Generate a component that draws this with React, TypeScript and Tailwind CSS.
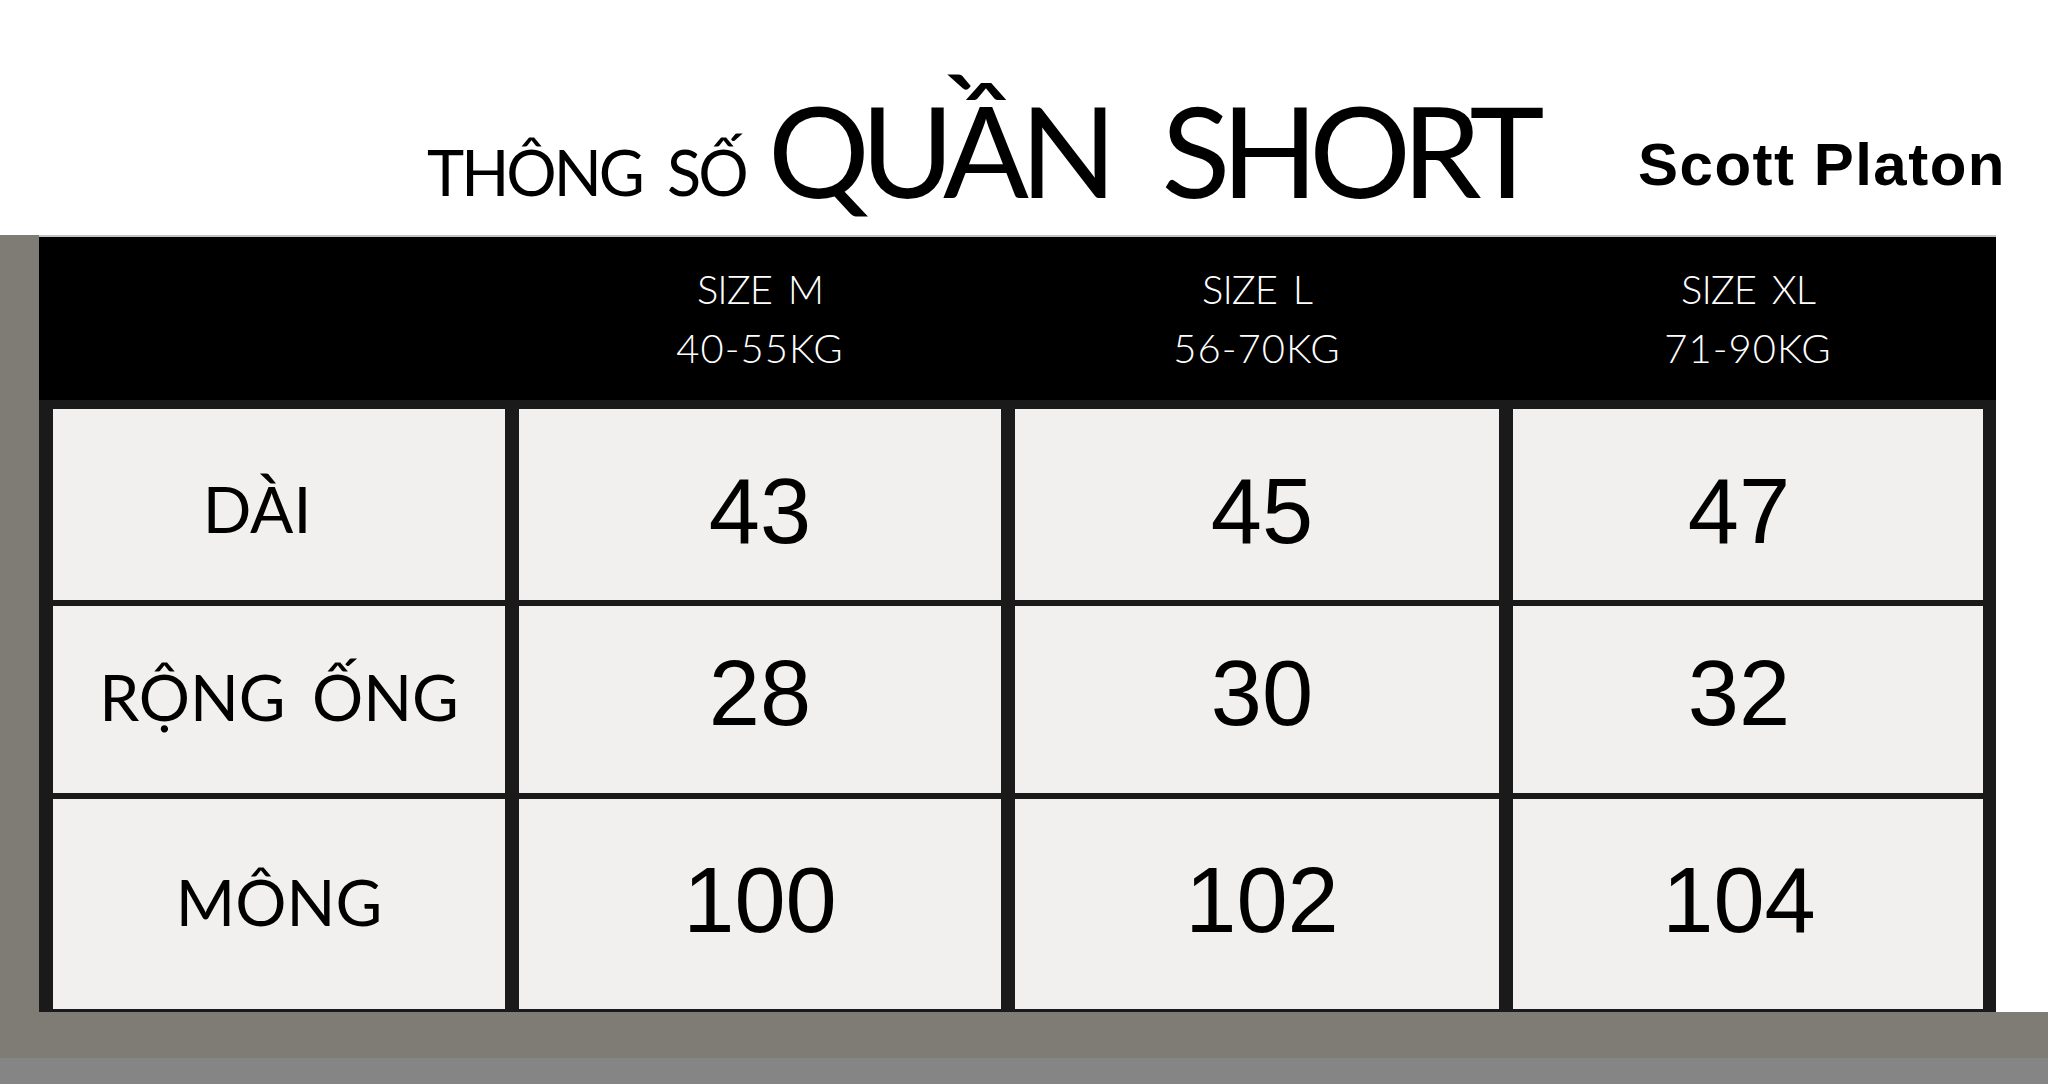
import { Fragment } from 'react';

const sizes = [
  { ten: 'SIZE M', kg: '40-55KG' },
  { ten: 'SIZE L', kg: '56-70KG' },
  { ten: 'SIZE XL', kg: '71-90KG' },
];

// chinh lech nho theo anh goc: hang + cot
const hang = [
  { nhan: 'DÀI', so: ['43', '45', '47'], nhanPad: 'pt-[9px] pr-[44px]', soPad: 'pt-[13px]' },
  { nhan: 'RỘNG ỐNG', so: ['28', '30', '32'], nhanPad: 'pb-[5px]', soPad: 'pb-[13px]' },
  { nhan: 'MÔNG', so: ['100', '102', '104'], nhanPad: 'pb-[5px]', soPad: 'pb-[8px]' },
];
const cotPad = ['', 'pl-[10px]', 'pr-[18px]'];

const cot = 'grid grid-cols-[452px_482px_484px_470px] gap-x-[14px]';

export default function App() {
  return (
    <div className="flex h-[1084px] w-[2048px] flex-col overflow-hidden bg-white">
      {/* tieu de */}
      <header className="flex h-[235px] shrink-0 items-start pl-[427px] text-black">
        <span className="mt-[140px] w-[341px] font-['Lato',sans-serif] text-[63px] leading-none tracking-[-3px] [word-spacing:12px]">
          THÔNG SỐ
        </span>
        <span className="mt-[86px] w-[870px] font-['Lato',sans-serif] text-[127px] leading-none tracking-[-9px] [word-spacing:30px]">
          QUẦN SHORT
        </span>
        <span className="mt-[135px] font-['Liberation_Sans',Arial,sans-serif] text-[60px] font-bold leading-none tracking-[1.5px]">
          Scott Platon
        </span>
      </header>

      <div className="flex h-[777px] shrink-0">
        <div className="w-[39px] bg-[#7f7b75]" />
        <div className="flex w-[1957px] flex-col border-t-2 border-[#c2c2c2] bg-[#1a1a1a]">
          <div className={`${cot} h-[163px] bg-black pl-[14px] font-['Lato',sans-serif] text-[40px] font-light leading-[59px] text-white`}>
            <div />
            {sizes.map((s) => (
              <div key={s.ten} className="flex flex-col items-center justify-center">
                <span className="tracking-[-1px] [word-spacing:6px]">{s.ten}</span>
                <span className="tracking-[1px]">{s.kg}</span>
              </div>
            ))}
          </div>
          <div className={`${cot} mt-[9px] grid-rows-[191px_187px_210px] gap-y-[6px] pl-[14px] pr-[13px]`}>
            {hang.map((h) => (
              <Fragment key={h.nhan}>
                <div
                  className={`flex items-center justify-center bg-[#f1f0ee] font-['Lato',sans-serif] text-[64px] text-black [word-spacing:10px] ${h.nhanPad}`}
                >
                  {h.nhan}
                </div>
                {h.so.map((v, i) => (
                  <div
                    key={v}
                    className={`flex items-center justify-center bg-[#f1f0ee] font-['Liberation_Sans',Arial,sans-serif] text-[92px] text-black ${h.soPad} ${cotPad[i]}`}
                  >
                    {v}
                  </div>
                ))}
              </Fragment>
            ))}
          </div>
        </div>
        <div className="flex-1 bg-white" />
      </div>

      <div className="h-[46px] shrink-0 bg-[#7f7b75]" />
      <div className="flex-1 bg-[#858585]" />
    </div>
  );
}
